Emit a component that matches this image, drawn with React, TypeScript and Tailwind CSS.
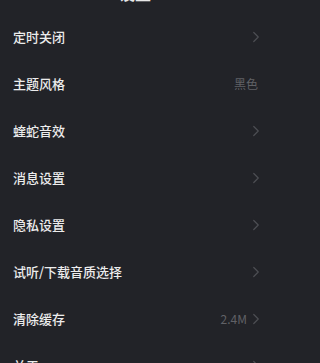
import { ChevronLeft, ChevronRight } from 'lucide-react'

const rows: { label: string; value?: string; arrow?: boolean }[] = [
  { label: '定时关闭', arrow: true },
  { label: '主题风格', value: '黑色' },
  { label: '蝰蛇音效', arrow: true },
  { label: '消息设置', arrow: true },
  { label: '隐私设置', arrow: true },
  { label: '试听/下载音质选择', arrow: true },
  { label: '清除缓存', value: '2.4M', arrow: true },
  { label: '关于', arrow: true },
]

export default function App() {
  return (
    <div className="h-[363px] w-full overflow-hidden bg-[#222328]">
      <div
        className="w-[270px]"
        style={{ fontFamily: '"Noto Sans CJK SC", "Noto Sans", sans-serif' }}
      >
        {/* Header, scrolled mostly out of view */}
        <div className="relative -mt-[28px] flex h-[41px] items-center justify-center">
          <ChevronLeft size={20} className="absolute left-[8px] text-[#d8d8d8]" />
          <span className="text-[16px] font-bold text-[#e8e8e8]">设置</span>
        </div>

        {rows.map((r) => (
          <div key={r.label} className="flex h-[47px] items-center pl-[13px] pr-[9px]">
            <span className="flex-1 text-[13px] font-medium leading-none text-[#ececec]">{r.label}</span>
            {r.value && (
              <span className={`text-[12px] text-[#606166] ${r.arrow ? '' : 'mr-[3px]'}`}>{r.value}</span>
            )}
            {r.arrow && (
              <ChevronRight size={18} strokeWidth={1.6} className="-mr-[4px] text-[#4d4e53]" />
            )}
          </div>
        ))}
      </div>
    </div>
  )
}
